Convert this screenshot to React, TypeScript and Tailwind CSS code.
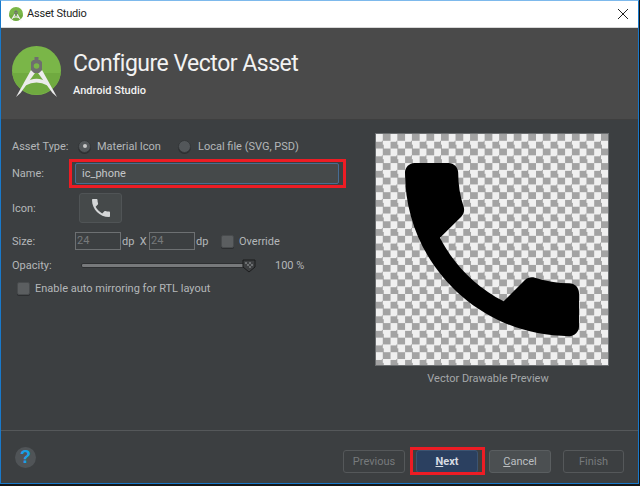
const PHONE =
  'M6.62 10.79c1.44 2.83 3.76 5.14 6.59 6.59l2.2-2.2c.27-.27.67-.36 1.02-.24 1.12.37 2.33.57 3.57.57.55 0 1 .45 1 1V20c0 .55-.45 1-1 1-9.39 0-17-7.61-17-17 0-.55.45-1 1-1h3.5c.55 0 1 .45 1 1 0 1.25.2 2.45.57 3.57.11.35.03.74-.25 1.02l-2.2 2.2z'

function Logo({ size }: { size: number }) {
  return (
    <svg width={size} height={size} viewBox="0 0 49 49" className="overflow-visible shrink-0">
      <circle cx="24.5" cy="24.5" r="24.5" fill="#7ab648" />
      <path d="M0.2 27a24.5 24.5 0 0 0 48.6 0z" fill="#70aa40" />
      <path d="M19 24 L4 51 L8.5 47 L23 27z" fill="#ececec" />
      <path d="M30 24 L45 51 L40.5 47 L26 27z" fill="#ececec" />
      <path d="M12.5 36.5 Q24.5 29 36.5 36.5 L35.5 39.5 Q24.5 33.5 13.5 39.5z" fill="#ececec" />
      <path d="M22.5 11 h4 v3 h1.5 l2 2 v8 l-3 3 h-5 l-3 -3 v-8 l2 -2 h1.5z" fill="#6e6e6e" />
      <circle cx="24.5" cy="20" r="2.8" fill="#7ab648" />
    </svg>
  )
}

function Radio({ checked }: { checked?: boolean }) {
  return (
    <span className="w-[13px] h-[13px] rounded-full bg-[#53575a] border border-[#35383a] flex items-center justify-center shadow-[0_1px_0_#2c2e30]">
      {checked && <span className="w-[4px] h-[4px] rounded-full bg-[#c8c8c8]" />}
    </span>
  )
}

function Checkbox() {
  return <span className="w-[13px] h-[13px] rounded-[2px] bg-[#5b5e60] border border-[#484b4d] shadow-[0_1px_0_#2c2e30]" />
}

function SizeInput() {
  return (
    <span className="w-[46px] h-[18px] border border-[#6d7072] pl-[1px] leading-[16px] text-[#777a7c] bg-[#3c3f41]">24</span>
  )
}

function RedBox({ className }: { className: string }) {
  return <span className={`absolute border-[3px] border-[#ed1c24] ${className}`} />
}

function WizardButton({ label, className }: { label: React.ReactNode; className: string }) {
  return (
    <button className={`relative h-[23px] pt-[1px] rounded-[3px] border text-[11px] ${className}`}>{label}</button>
  )
}

export default function App() {
  return (
    <div className="w-[640px] h-[486px] bg-[#161616] overflow-hidden font-['Roboto',sans-serif] text-[11px]">
      <div className="w-[639px] h-[484px] flex flex-col border border-[#1979ca] border-t-[#7db9ec]">
        {/* title bar */}
        <div className="h-[27px] bg-white flex items-center pl-[8px] pr-[9px] border-b border-[#d8d8d8]">
          <Logo size={14} />
          <span className="ml-[4px] text-[11px] tracking-[-0.2px] text-[#222]">Asset Studio</span>
          <svg className="ml-auto" width="12" height="12" viewBox="0 0 12 12">
            <path d="M1 1 L11 11 M11 1 L1 11" stroke="#222" strokeWidth="1" fill="none" />
          </svg>
        </div>

        {/* header */}
        <div className="h-[92px] bg-[#4a4a4a] flex items-start pl-[11px] pt-[18px] border-b border-[#3f3f3f]">
          <Logo size={49} />
          <div className="ml-[12px] text-[#f2f2f2]">
            <div className="text-[23px] tracking-[-0.5px] leading-[32px] mt-[2px]">Configure Vector Asset</div>
            <div className="text-[11px] leading-[16px] mt-[3px] font-medium">Android Studio</div>
          </div>
        </div>

        {/* form + preview */}
        <div className="h-[311px] bg-[#3c3f41] flex border-b border-[#55585a] text-[#b4b7b9]">
          <div className="w-[374px] pl-[11px] pt-[17px] flex flex-col">
            <div className="h-[18px] flex items-center">
              <span className="w-[66px] pt-[2px]">Asset Type:</span>
              <Radio checked />
              <span className="ml-[6px] w-[81px] pt-[2px]">Material Icon</span>
              <Radio />
              <span className="ml-[7px] pt-[2px]">Local file (SVG, PSD)</span>
            </div>
            <div className="h-[21px] mt-[8px] flex items-center">
              <span className="w-[63px] pt-[2px]">Name:</span>
              <div className="relative w-[264px] h-[21px] bg-[#45494a] border border-[#466d94] rounded-[2px] pl-[6px] leading-[20px] text-[#c4c7c9]">
                ic_phone
                <RedBox className="-left-[7px] -right-[8px] -top-[5px] -bottom-[5px]" />
              </div>
            </div>
            <div className="h-[30px] mt-[9px] flex items-center">
              <span className="w-[67px] pt-[2px]">Icon:</span>
              <div className="w-[43px] h-[30px] bg-[#45494a] border border-[#505456] rounded-[3px] flex items-center justify-center">
                <svg width="24" height="24" viewBox="0 0 24 24">
                  <path d={PHONE} fill="#d4d6d7" />
                </svg>
              </div>
            </div>
            <div className="h-[18px] mt-[9px] flex items-center">
              <span className="w-[63px] pt-[2px]">Size:</span>
              <SizeInput />
              <span className="ml-[1px] w-[27px] pt-[2px] whitespace-pre">dp  X</span>
              <SizeInput />
              <span className="ml-[1px] w-[25px] pt-[2px]">dp</span>
              <Checkbox />
              <span className="ml-[5px] pt-[2px]">Override</span>
            </div>
            <div className="h-[16px] mt-[7px] flex items-center">
              <span className="w-[69px] pt-[2px]">Opacity:</span>
              <div className="relative w-[168px] h-[5px] bg-[#77797b] border border-[#2e3032] rounded-[2px]">
                <svg className="absolute -right-[8px] -top-[5px]" width="14" height="14" viewBox="0 0 14 14">
                  <path d="M1 1 H13 V8 L7 13 L1 8z" fill="#3d3f41" stroke="#1b1c1d" />
                  <path d="M3 3 h2 v2 h-2z M7 3 h2 v2 h-2z M5 5 h2 v2 h-2z M9 5 h2 v2 h-2z M7 7 h2 v2 h-2z" fill="#6b6e70" />
                </svg>
              </div>
              <span className="ml-[26px] pt-[2px]">100 %</span>
            </div>
            <div className="h-[16px] mt-[7px] pl-[5px] flex items-center">
              <Checkbox />
              <span className="ml-[5px] pt-[2px]">Enable auto mirroring for RTL layout</span>
            </div>
          </div>

          <div className="w-[234px] pt-[13px] flex flex-col">
            <div className="w-[234px] h-[233px] border border-[#6b6e70] bg-[#f0f0f0] bg-[conic-gradient(#a3a3a3_25%,transparent_0_50%,#a3a3a3_0_75%,transparent_0)] bg-size-[14.56px_14.56px]">
              <svg width="232" height="231" viewBox="0 0 24 24" preserveAspectRatio="none">
                <path d={PHONE} fill="#000" />
              </svg>
            </div>
            <div className="text-center mt-[5px] pr-[8px] text-[#a4a7a9] text-[11px]">Vector Drawable Preview</div>
          </div>
        </div>

        {/* footer */}
        <div className="flex-1 bg-[#3c3f41] flex items-start pl-[14px] pr-[14px]">
          <div className="mt-[16px] w-[21px] h-[21px] rounded-full bg-[#505457] flex items-center justify-center text-[#18a0e8] font-bold text-[18px] font-['Liberation_Sans',sans-serif]">?</div>
          <div className="ml-auto mt-[19px] flex">
            <WizardButton label="Previous" className="w-[62px] border-[#55585a] text-[#777a7c]" />
            <WizardButton
              label={<><u>N</u>ext<RedBox className="-left-[7px] -right-[8px] -top-[4px] -bottom-[3px]" /></>}
              className="ml-[11px] w-[62px] bg-[#2b4060] border-[#3c5472] text-[#d6dbe2] font-bold"
            />
            <WizardButton
              label={<><u>C</u>ancel</>}
              className="ml-[11px] w-[62px] bg-[#4b4f51] border-[#5a5e60] text-[#bcbfc1]"
            />
            <WizardButton label="Finish" className="ml-[12px] w-[61px] border-[#55585a] text-[#777a7c]" />
          </div>
        </div>
      </div>
    </div>
  )
}
